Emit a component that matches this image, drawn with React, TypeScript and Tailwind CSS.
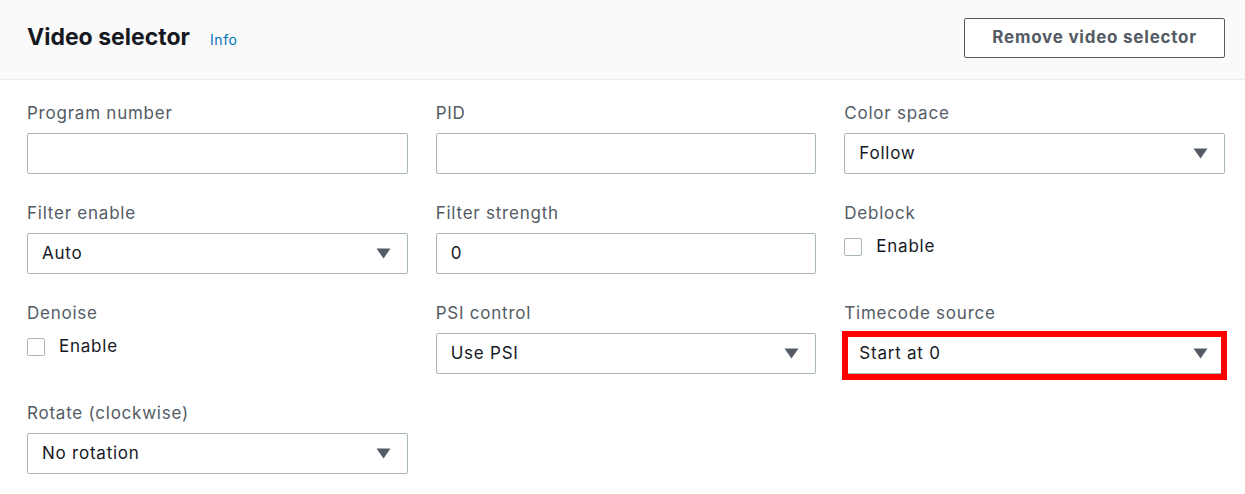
import { useState } from 'react';

const FONT = "font-['Inter','Liberation_Sans',sans-serif]";

function Caret() {
  return (
    <svg className="w-[15px] h-[11px] text-[#545b64]" viewBox="0 0 15 11" fill="currentColor">
      <path d="M0.5 0.5h14L7.5 10.5z" />
    </svg>
  );
}

function Label({ children }: { children: React.ReactNode }) {
  return <div className="text-[17px] leading-[20px] tracking-[0.045em] text-[#545b64] h-[20px]">{children}</div>;
}

function TextInput({ value = '' }: { value?: string }) {
  return (
    <div className="h-[41px] border border-[#aab7b8] rounded-[2px] bg-white flex items-center px-[14px] text-[17px] tracking-[0.045em] text-[#16191f]">
      {value}
    </div>
  );
}

function Select({ value }: { value: string }) {
  return (
    <div className="h-[41px] border border-[#aab7b8] rounded-[2px] bg-white flex items-center justify-between pl-[14px] pr-[16px] text-[17px] tracking-[0.045em] text-[#16191f]">
      <span>{value}</span>
      <Caret />
    </div>
  );
}

function Checkbox({ label }: { label: string }) {
  const [checked, setChecked] = useState(false);
  return (
    <button
      type="button"
      onClick={() => setChecked(!checked)}
      className="flex items-center gap-[14px] mt-[1px] text-[17px] tracking-[0.045em] text-[#16191f]"
    >
      <span className="w-[18px] h-[18px] border border-[#aab7b8] rounded-[2px] bg-white" />
      <span>{label}</span>
    </button>
  );
}

function Field({ label, children }: { label: string; children: React.ReactNode }) {
  return (
    <div className="flex flex-col gap-[10px] h-[100px]">
      <Label>{label}</Label>
      {children}
    </div>
  );
}

export default function App() {
  return (
    <div className={`w-[1245px] h-[494px] bg-white ${FONT}`}>
      {/* Header */}
      <div className="h-[80px] bg-[#fafafa] border-b border-[#eaeded] flex items-center justify-between pl-[27px] pr-[20px]">
        <div className="flex items-baseline gap-[20px] -mt-[4px]">
          <h2 className="text-[23px] font-bold text-[#16191f]">Video selector</h2>
          <a className="text-[14px] tracking-[0.045em] text-[#0073bb]">Info</a>
        </div>
        <button className="h-[40px] px-[27px] border border-[#545b64] rounded-[2px] bg-white text-[17px] font-bold tracking-[0.045em] text-[#545b64] -mt-[4px]">
          Remove video selector
        </button>
      </div>

      {/* Fields */}
      <div className="grid grid-cols-3 gap-x-[28px] pl-[27px] pr-[20px] pt-[23px]">
        <Field label="Program number">
          <TextInput />
        </Field>
        <Field label="PID">
          <TextInput />
        </Field>
        <Field label="Color space">
          <Select value="Follow" />
        </Field>

        <Field label="Filter enable">
          <Select value="Auto" />
        </Field>
        <Field label="Filter strength">
          <TextInput value="0" />
        </Field>
        <Field label="Deblock">
          <Checkbox label="Enable" />
        </Field>

        <Field label="Denoise">
          <Checkbox label="Enable" />
        </Field>
        <Field label="PSI control">
          <Select value="Use PSI" />
        </Field>
        <Field label="Timecode source">
          <div className="relative">
            <Select value="Start at 0" />
            <div className="absolute -left-[2px] -right-[2px] -top-[2px] -bottom-[6px] border-[6px] border-[#ff0000] pointer-events-none" />
          </div>
        </Field>

        <Field label="Rotate (clockwise)">
          <Select value="No rotation" />
        </Field>
      </div>
    </div>
  );
}
